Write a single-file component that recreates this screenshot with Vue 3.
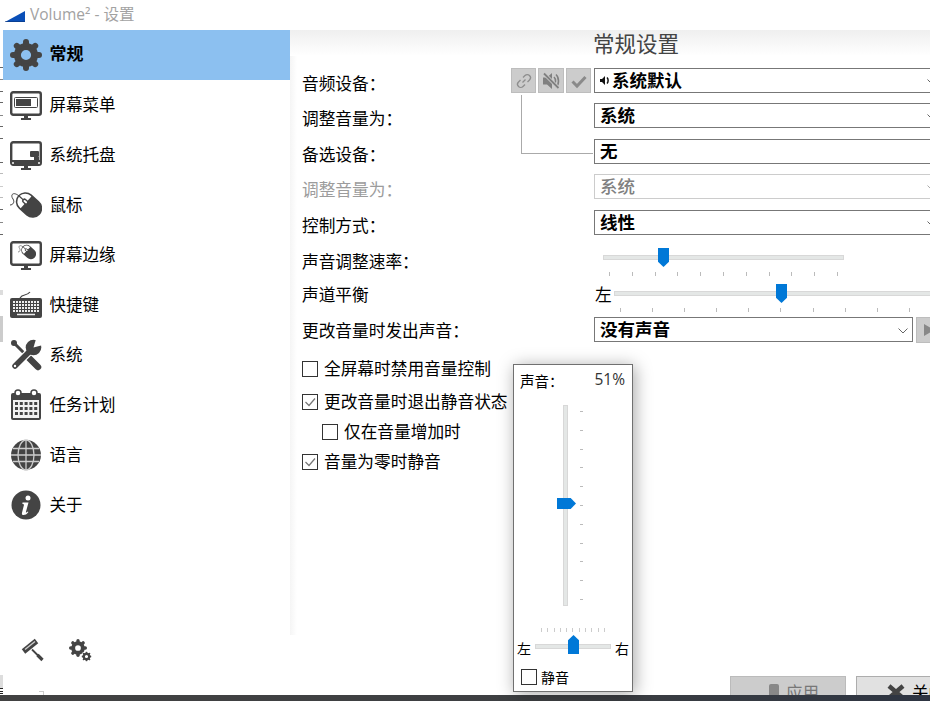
<script setup>
const nav = [
  { icon: 'gear', label: '常规', active: true },
  { icon: 'menu', label: '屏幕菜单' },
  { icon: 'tray', label: '系统托盘' },
  { icon: 'mouse', label: '鼠标' },
  { icon: 'edge', label: '屏幕边缘' },
  { icon: 'keyboard', label: '快捷键' },
  { icon: 'tools', label: '系统' },
  { icon: 'calendar', label: '任务计划' },
  { icon: 'globe', label: '语言' },
  { icon: 'info', label: '关于' }
]
const teeth = [0, 45, 90, 135, 180, 225, 270, 315]
const checks = [
  { label: '全屏幕时禁用音量控制', on: false, sub: false },
  { label: '更改音量时退出静音状态', on: true, sub: false },
  { label: '仅在音量增加时', on: false, sub: true },
  { label: '音量为零时静音', on: true, sub: false }
]
const edge = [
  { t: 67, h: 1, c: '#666' }, { t: 79, h: 1, c: '#888' }, { t: 91, h: 1, c: '#666' },
  { t: 102, h: 1, c: '#666' }, { t: 115, h: 1, c: '#888' }, { t: 126, h: 1, c: '#666' },
  { t: 138, h: 1, c: '#666' }, { t: 162, h: 1, c: '#666' }, { t: 173, h: 1, c: '#bbb' },
  { t: 186, h: 1, c: '#ccc' }, { t: 197, h: 1, c: '#bbb' }, { t: 209, h: 1, c: '#666' },
  { t: 222, h: 1, c: '#888' }, { t: 234, h: 1, c: '#666' }, { t: 290, h: 5, c: '#ddd' },
  { t: 316, h: 26, c: '#ccc' }, { t: 675, h: 13, c: '#ddd' }, { t: 688, h: 1, c: '#222' },
  { t: 691, h: 1, c: '#222' }, { t: 693, h: 1, c: '#222' }
]
</script>

<template>
  <div class="app">
    <svg class="defs" width="0" height="0" aria-hidden="true">
      <symbol id="gear" viewBox="0 0 32 32">
        <circle cx="16" cy="16" r="8.6" fill="none" stroke="#444" stroke-width="7" />
        <line v-for="a in teeth" :key="a" x1="16" y1="5" x2="16" y2="3" stroke="#444" stroke-width="6" stroke-linecap="round" :transform="`rotate(${a} 16 16)`" />
      </symbol>
      <symbol id="monitor" viewBox="0 0 32 32">
        <rect x="1.2" y="3.2" width="29.6" height="22.6" rx="2" fill="none" stroke="#444" stroke-width="2.4" />
        <path d="M14 26h4v3h3v2H11v-2h3z" fill="#444" />
      </symbol>
      <symbol id="mouse" viewBox="0 0 32 32">
        <path d="M9 7C3 2 0 6 3 10c2 3 0 6-3 6" fill="none" stroke="#444" stroke-width="1" />
        <g transform="rotate(42 19 16)">
          <rect x="4.5" y="6.5" width="29" height="19" rx="9.5" fill="#444" />
          <path d="M15 8h-1a8 8 0 0 0-8 7.4h9zM15 16.6H6a8 8 0 0 0 8 7.4h1z" fill="#fff" />
          <rect x="10.5" y="13.6" width="7" height="4.8" rx="2.2" fill="#444" />
          <rect x="12" y="15" width="4" height="2" rx="1" fill="#fff" />
        </g>
      </symbol>
    </svg>

    <header class="titlebar">
      <svg class="logo" width="20" height="11" viewBox="0 0 20 11"><path d="M0 11 20 0v11z" fill="#0a4fb8" /><path d="M0 11h20" stroke="#08306e" stroke-width="1" /></svg>
      <span class="title">Volume² - 设置</span>
    </header>

    <div class="body">
      <aside class="sidebar">
        <nav class="nav">
          <div v-for="item in nav" :key="item.label" class="nav-item" :class="{ active: item.active }">
            <svg class="nav-icon" width="32" height="32" viewBox="0 0 32 32">
              <use v-if="item.icon === 'gear'" href="#gear" width="32" height="32" />
              <template v-else-if="item.icon === 'menu'">
                <use href="#monitor" width="32" height="32" />
                <rect x="4.5" y="8.5" width="23" height="10" rx="1" fill="none" stroke="#444" />
                <rect x="6" y="10" width="15" height="7" fill="#444" />
              </template>
              <template v-else-if="item.icon === 'tray'">
                <use href="#monitor" width="32" height="32" />
                <rect x="1" y="21" width="30" height="5" fill="#444" />
                <rect x="2" y="23" width="2" height="2" fill="#ccc" />
                <rect x="28" y="23" width="2" height="2" fill="#ccc" />
                <rect x="20" y="12" width="9" height="6" rx="1" fill="#444" />
                <rect x="24" y="18" width="5" height="3" fill="#444" />
              </template>
              <use v-else-if="item.icon === 'mouse'" href="#mouse" width="32" height="32" />
              <template v-else-if="item.icon === 'edge'">
                <use href="#monitor" width="32" height="32" />
                <use href="#mouse" x="8" y="4" width="18" height="18" />
              </template>
              <template v-else-if="item.icon === 'keyboard'">
                <path d="M10 9C13 4 16 8 20 3" fill="none" stroke="#444" stroke-width="1.2" />
                <rect x="0" y="9" width="32" height="20" rx="2" fill="#444" />
                <g stroke="#eee" fill="none">
                  <path d="M3 13H29M3 16H29M3 19H29M3 22H29" stroke-width="2" stroke-dasharray="2 1" />
                  <path d="M7 25.5H25" stroke-width="1.5" />
                </g>
              </template>
              <template v-else-if="item.icon === 'tools'">
                <circle cx="4" cy="4" r="3" fill="#444" />
                <line x1="4" y1="4" x2="18" y2="18" stroke="#444" stroke-width="3" />
                <line x1="17" y1="17" x2="28" y2="28" stroke="#444" stroke-width="6.5" stroke-linecap="round" />
                <line x1="5" y1="27" x2="21" y2="11" stroke="#fff" stroke-width="8" />
                <line x1="5" y1="27" x2="21" y2="11" stroke="#444" stroke-width="5.5" stroke-linecap="round" />
                <circle cx="23.5" cy="8.5" r="7.8" fill="#444" />
                <path d="M23.5 8.5 26 0h7v6z" fill="#fff" />
                <circle cx="5" cy="27" r="1.2" fill="#fff" />
              </template>
              <template v-else-if="item.icon === 'calendar'">
                <rect x="1" y="4" width="30" height="27" rx="2" fill="#444" />
                <rect x="3" y="11" width="26" height="18" fill="#f2f2f2" />
                <circle cx="8" cy="4" r="3" fill="#fff" stroke="#444" stroke-width="1.5" />
                <circle cx="24" cy="4" r="3" fill="#fff" stroke="#444" stroke-width="1.5" />
                <path d="M5 14.5H27.5M5 19.5H27.5M5 24.5H27.5" stroke="#444" stroke-width="3" stroke-dasharray="3 1.8" />
              </template>
              <template v-else-if="item.icon === 'globe'">
                <circle cx="16" cy="16" r="15" fill="#444" />
                <g fill="none" stroke="#ccc" stroke-width="1.3">
                  <path d="M16 1V31M3 9.5H29M1 16H31M3 22.5H29" />
                  <ellipse cx="16" cy="16" rx="8" ry="15" />
                </g>
              </template>
              <template v-else-if="item.icon === 'info'">
                <circle cx="16" cy="16" r="14.5" fill="#444" />
                <circle cx="18" cy="9" r="2.5" fill="#fff" />
                <path d="M12.5 13.5h6l-2.6 9.4c-.2.9.6 1 1.9-.4l.6.5c-1.700 2.400-3.200 3-4.800 3-1.300 0-2-.9-1.600-2.300l1.900-7.500c.2-.9-.3-1.300-1.500-1.300z" fill="#fff" />
              </template>
            </svg>
            <span class="nav-label">{{ item.label }}</span>
          </div>
        </nav>
        <div class="side-tools">
          <svg width="24" height="24" viewBox="0 0 24 24">
            <line x1="2.500" y1="13.500" x2="15.500" y2="3" stroke="#444" stroke-width="5.500" />
            <line x1="4" y1="11.500" x2="14" y2="3.500" stroke="#ccc" stroke-width="1.400" />
            <line x1="11" y1="11.500" x2="18" y2="18.500" stroke="#444" stroke-width="1.800" />
            <line x1="16.500" y1="17" x2="21.500" y2="22" stroke="#444" stroke-width="3.200" />
          </svg>
          <svg width="24" height="24" viewBox="0 0 24 24">
            <use href="#gear" x="1" y="1" width="18" height="18" />
            <circle cx="18.500" cy="18.500" r="5.500" fill="#fff" />
            <use href="#gear" x="13.500" y="13.500" width="10" height="10" />
          </svg>
        </div>
      </aside>

      <main class="main">
        <h1 class="heading">常规设置</h1>
        <section class="form">
          <div class="connector"></div>

          <div class="label first">
            <span>音频设备：</span>
            <div class="actions">
              <button class="act">
                <svg width="18" height="18" viewBox="0 0 18 18" fill="none" stroke="#8e8e8e" stroke-width="1.300"><path d="M7.500 10.500 10.500 7.500M8 5.500l2-2a3 3 0 0 1 4.500 4.500l-2 2M10 12.500l-2 2A3 3 0 0 1 3.500 10l2-2" /></svg>
              </button>
              <button class="act wide">
                <svg width="20" height="20" viewBox="0 0 20 20"><path d="M2 6.500h4l5-4.500v16l-5-4.500H2z" fill="#808080" /><path d="M13 6c2 2 2 6 0 8M15 3.500c3.300 3 3.300 10 0 13" fill="none" stroke="#808080" stroke-width="1.600" /><path d="M3 2.500 17.500 17" stroke="#ccc" stroke-width="3.600" /><path d="M3 2.500 17.500 17" stroke="#808080" stroke-width="1.800" /></svg>
              </button>
              <button class="act">
                <svg width="18" height="18" viewBox="0 0 18 18"><path d="M2.500 9.500 7 14l8.500-9" fill="none" stroke="#8a8a8a" stroke-width="3" /></svg>
              </button>
            </div>
          </div>
          <div class="select">
            <svg class="spk" width="11" height="11" viewBox="0 0 11 11"><path d="M0 4h2l3-3v9L2 7H0z" fill="#111" /><path d="M7 2.500c1.500 1.500 1.500 4.500 0 6" fill="none" stroke="#111" stroke-width="1.500" /></svg>
            <span>系统默认</span>
            <svg class="chev" width="10" height="6" viewBox="0 0 10 6"><path d="M.5.500 5 5 9.500.500" fill="none" stroke="#666" /></svg>
          </div>

          <div class="label">调整音量为：</div>
          <div class="select">
            <span>系统</span>
            <svg class="chev" width="10" height="6" viewBox="0 0 10 6"><path d="M.5.500 5 5 9.500.500" fill="none" stroke="#666" /></svg>
          </div>

          <div class="label">备选设备：</div>
          <div class="select"><span>无</span></div>

          <div class="label disabled">调整音量为：</div>
          <div class="select off">
            <span>系统</span>
            <svg class="chev" width="10" height="6" viewBox="0 0 10 6"><path d="M.5.500 5 5 9.500.500" fill="none" stroke="#aaa" /></svg>
          </div>

          <div class="label">控制方式：</div>
          <div class="select">
            <span>线性</span>
            <svg class="chev" width="10" height="6" viewBox="0 0 10 6"><path d="M.5.500 5 5 9.500.500" fill="none" stroke="#666" /></svg>
          </div>

          <div class="label">声音调整速率：</div>
          <div class="slider rate">
            <div class="track"></div>
            <div class="thumb"></div>
            <div class="ticks"><i v-for="n in 11" :key="n"></i></div>
          </div>

          <div class="label balance-label">声道平衡</div>
          <div class="balance">
            <span class="side">左</span>
            <div class="slider pan">
              <div class="track"></div>
              <div class="thumb"></div>
              <div class="ticks"><i v-for="n in 11" :key="n"></i></div>
            </div>
          </div>

          <div class="label balance-label">更改音量时发出声音：</div>
          <div class="sound">
            <div class="select short">
              <span>没有声音</span>
              <svg class="chev" width="10" height="6" viewBox="0 0 10 6"><path d="M.5.500 5 5 9.500.500" fill="none" stroke="#666" /></svg>
            </div>
            <button class="play">
              <svg width="10" height="12" viewBox="0 0 10 12"><path d="M0 0 10 6 0 12z" fill="#888" /></svg>
            </button>
          </div>
        </section>

        <section class="checks">
          <label v-for="c in checks" :key="c.label" class="check" :class="{ sub: c.sub }">
            <span class="box">
              <svg v-if="c.on" width="14" height="14" viewBox="0 0 14 14"><path d="M2.500 7 6 10.500 12 3.500" fill="none" stroke="#777" stroke-width="1.200" /></svg>
            </span>
            <span class="check-text">{{ c.label }}</span>
          </label>
        </section>

        <footer class="footer">
          <button class="btn apply">
            <span class="apply-icon"></span>
            <span>应用</span>
          </button>
          <button class="btn close">
            <svg width="18" height="16" viewBox="0 0 18 16"><path d="M2 2 16 14M16 2 2 14" stroke="#444" stroke-width="4.500" /></svg>
            <span>关闭</span>
          </button>
        </footer>
      </main>
    </div>

    <div class="taskbar"></div>

    <div class="popup">
      <div class="pop-head">
        <span>声音：</span>
        <span class="pct">51%</span>
      </div>
      <div class="vslider">
        <div class="vtrack"></div>
        <div class="vthumb"></div>
        <div class="vticks"><i v-for="n in 11" :key="n"></i></div>
      </div>
      <div class="hticks"><i v-for="n in 11" :key="n"></i></div>
      <div class="hrow">
        <span class="hside">左</span>
        <div class="htrack"><div class="hthumb"></div></div>
        <span class="hside">右</span>
      </div>
      <label class="check pop-check">
        <span class="box"></span>
        <span>静音</span>
      </label>
    </div>

    <div class="edge">
      <i v-for="e in edge" :key="e.t" :style="{ top: e.t + 'px', height: e.h + 'px', background: e.c }"></i>
    </div>
    <div class="stray"></div>
  </div>
</template>

<style scoped>
.app {
  position: relative;
  width: 930px;
  height: 701px;
  overflow: hidden;
  display: flex;
  flex-direction: column;
  background: #fff;
  color: #000;
  font-family: "Noto Sans CJK SC", "Noto Sans", sans-serif;
  font-size: 16.7px;
}
.defs { position: absolute; }
.titlebar {
  height: 30px;
  flex: none;
  display: flex;
  align-items: center;
  padding-left: 5px;
  gap: 5px;
}
.logo { margin-top: 2px; }
.title {
  font-family: "Open Sans", "Noto Sans CJK SC", sans-serif;
  font-size: 15.500px;
  color: #a2a2a2;
  padding-bottom: 3px;
}
.body { flex: 1; min-height: 0; display: flex; }
.sidebar {
  width: 287px;
  margin-left: 3px;
  flex: none;
  display: flex;
  flex-direction: column;
  justify-content: space-between;
  padding-bottom: 33px;
  box-sizing: border-box;
}
.nav-item {
  height: 50px;
  display: flex;
  align-items: center;
  padding-left: 7px;
  gap: 7.500px;
}
.nav-label { font-size: 16.500px; padding-bottom: 3px; }
.nav-item.active { background: #8cc0f0; }
.nav-item.active .nav-label { font-size: 17px; font-weight: 700; padding-bottom: 5px; }
.nav-icon { flex: none; }
.side-tools { display: flex; gap: 23px; padding-left: 18px; }
.main {
  flex: 1;
  min-width: 0;
  display: flex;
  flex-direction: column;
  background:
    linear-gradient(to bottom, #efefef, #fff) top left / 100% 26px no-repeat,
    linear-gradient(to right, #f5f5f5, #fff) top left / 7px 605px no-repeat;
}
.heading {
  margin: 0 0 10px;
  padding-left: 303px;
  height: 28px;
  line-height: 26px;
  font-size: 21.500px;
  font-weight: 400;
  color: #444;
  white-space: nowrap;
}
.form {
  position: relative;
  margin-left: 13px;
  display: grid;
  grid-template-columns: 291px 348px;
  grid-template-rows: 35px 36px 35px 36px 36px 35px 36px 35px;
}
.connector {
  position: absolute;
  left: 218px;
  top: 27px;
  width: 71px;
  height: 58px;
  border-left: 1px solid #aaa;
  border-bottom: 1px solid #aaa;
}
.label { margin-left: -1px; padding-top: 4px; line-height: 22px; white-space: nowrap; }
.label.disabled { color: #9c9c9c; }
.balance-label { padding-top: 2px; }
.label.first { display: flex; justify-content: space-between; padding-top: 0; padding-right: 3px; }
.label.first > span { padding-top: 4px; }
.actions { display: flex; gap: 2px; height: 25px; }
.act {
  width: 25px;
  height: 25px;
  padding: 0;
  box-sizing: border-box;
  display: flex;
  align-items: center;
  justify-content: center;
  background: #ccc;
  border: 1px solid #bdbdbd;
}
.act.wide { width: 26px; }
.select {
  position: relative;
  height: 25px;
  box-sizing: border-box;
  border: 1px solid #777;
  display: flex;
  align-items: center;
  padding-left: 5px;
  font-size: 17.500px;
  font-weight: 700;
  line-height: 22px;
  background: #fff;
  white-space: nowrap;
}
.select > span { padding-bottom: 2px; }
.select.off { border-color: #ccc; color: #808080; font-weight: 500; }
.select.short { width: 319px; flex: none; }
.spk { margin-right: 1px; }
.chev { position: absolute; right: 4px; top: 10px; }
.slider { position: relative; }
.rate { margin-left: 9px; width: 241px; padding-top: 9px; }
.pan { flex: none; width: 333px; padding-top: 10px; }
.track {
  height: 5px;
  box-sizing: border-box;
  background: #e4e7e6;
  border: 1px solid #d8d8d8;
}
.thumb {
  position: absolute;
  width: 11px;
  height: 19px;
  background: #0078d7;
  clip-path: polygon(0 0, 100% 0, 100% 72%, 50% 100%, 0 72%);
}
.rate .thumb { left: 55px; top: 2px; }
.pan .thumb { left: 162px; top: 3px; }
.ticks { display: flex; justify-content: space-between; }
.ticks i { width: 1px; height: 4px; background: #bbb; }
.rate .ticks { margin: 12px 6px 0; }
.pan .ticks { margin: 12px 5px 0 6px; }
.balance { display: flex; }
.side { width: 20px; flex: none; padding-top: 2px; line-height: 22px; padding-left: 1px; box-sizing: border-box; }
.sound { display: flex; gap: 3px; }
.play {
  flex: none;
  width: 30px;
  height: 26px;
  padding: 0 0 0 7px;
  box-sizing: border-box;
  display: flex;
  align-items: center;
  background: #ccc;
  border: 1px solid #bdbdbd;
}
.checks { margin: 9px 0 0 12px; display: flex; flex-direction: column; gap: 14px; }
.check { display: flex; align-items: center; gap: 6px; height: 16px; line-height: 16px; white-space: nowrap; }
.check-text { padding-bottom: 2px; }
.check:nth-child(2) { margin-top: 3px; }
.check.sub { margin-left: 20px; }
.box {
  width: 16px;
  height: 16px;
  flex: none;
  box-sizing: border-box;
  border: 1px solid #333;
  display: flex;
  align-items: center;
  justify-content: center;
  background: #fff;
}
.footer {
  margin-top: auto;
  height: 19px;
  overflow: hidden;
  display: flex;
  gap: 10px;
  padding-left: 440px;
  flex: none;
}
.btn {
  flex: none;
  width: 116px;
  height: 32px;
  box-sizing: border-box;
  padding: 0;
  display: flex;
  align-items: center;
  gap: 7px;
  font-family: inherit;
  font-size: 16.500px;
}
.apply { background: #ccc; border: 1px solid #bbb; color: #777; padding-left: 38px; }
.close { background: #e1e1e1; border: 1px solid #adadad; color: #000; padding-left: 30px; }
.apply-icon { width: 10px; height: 16px; background: #888; border-radius: 2px; }
.taskbar {
  height: 6px;
  flex: none;
  background: linear-gradient(to right, #424242, #3d3f42 60%, #2e3542);
}
.popup {
  position: absolute;
  left: 513px;
  top: 364px;
  width: 120px;
  height: 328px;
  box-sizing: border-box;
  border: 1px solid #707070;
  background: #fff;
  box-shadow: 2px 2px 16px rgba(0, 0, 0, 0.35);
  display: flex;
  flex-direction: column;
  font-size: 14.500px;
}
.pop-head {
  height: 40px;
  flex: none;
  box-sizing: border-box;
  padding: 5px 7px 0 6px;
  display: flex;
  justify-content: space-between;
  line-height: 22px;
}
.pct { font-family: "Open Sans", sans-serif; font-size: 15.500px; color: #333; margin-top: -2px; }
.vslider { position: relative; flex: none; height: 201px; margin-left: 49px; display: flex; gap: 12px; }
.vtrack { width: 5px; box-sizing: border-box; background: #e4e7e6; border: 1px solid #d8d8d8; }
.vthumb {
  position: absolute;
  left: -6px;
  top: 93px;
  width: 19px;
  height: 11px;
  background: #0078d7;
  clip-path: polygon(0 0, 72% 0, 100% 50%, 72% 100%, 0 100%);
}
.vticks { display: flex; flex-direction: column; justify-content: space-between; padding: 6px 0; }
.vticks i { width: 3px; height: 1px; background: #bbb; }
.hticks { flex: none; margin: 22px 0 0 27px; width: 64px; height: 4px; display: flex; justify-content: space-between; }
.hticks i { width: 1px; height: 4px; background: #ccc; }
.hrow { flex: none; height: 21px; margin-top: 4px; display: flex; align-items: center; padding-left: 3px; gap: 4px; }
.hside { width: 14px; font-size: 14px; padding-top: 4px; line-height: 17px; }
.htrack {
  position: relative;
  width: 76px;
  height: 5px;
  box-sizing: border-box;
  background: #e4e7e6;
  border: 1px solid #d8d8d8;
}
.hthumb {
  position: absolute;
  left: 32px;
  top: -10px;
  width: 11px;
  height: 19px;
  background: #0078d7;
  clip-path: polygon(50% 0, 100% 28%, 100% 100%, 0 100%, 0 28%);
}
.pop-check { margin: 12px 0 0 7px; gap: 4px; font-size: 14px; }
.edge { position: absolute; left: 0; top: 0; width: 3px; height: 701px; }
.edge i { position: absolute; left: 0; width: 3px; }
.stray {
  position: absolute;
  left: 39px;
  top: 691px;
  width: 5px;
  height: 4px;
  border-top: 1px solid #ccc;
  border-right: 1px solid #ccc;
  box-sizing: border-box;
}
</style>

<style>
html, body { margin: 0; background: #fff; overflow: hidden; }
</style>
